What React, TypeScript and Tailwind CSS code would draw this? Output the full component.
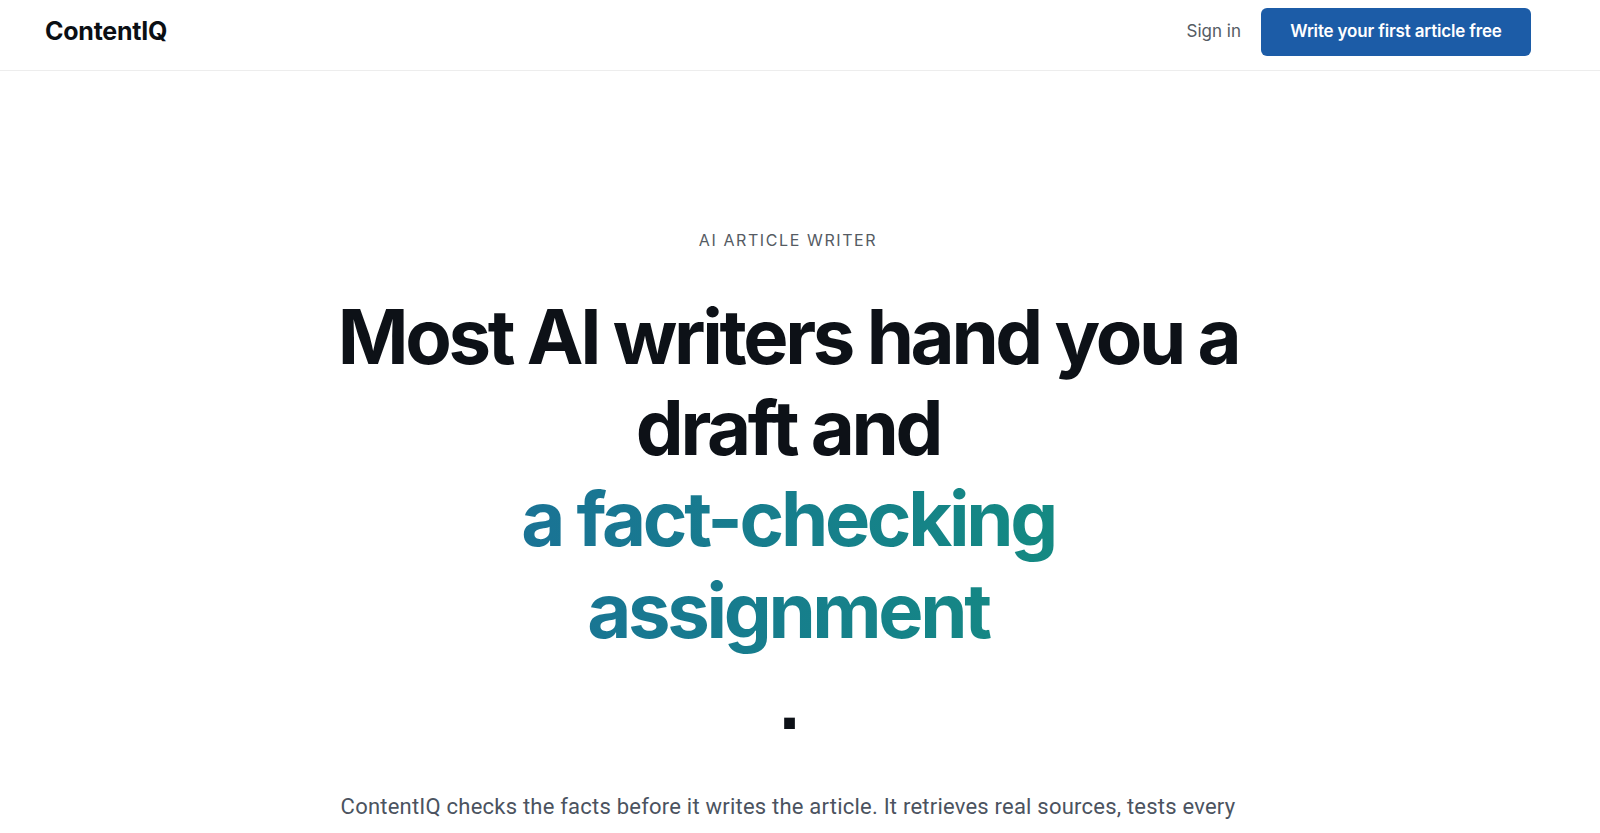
export default function App() {
  return (
    <div className="min-h-screen bg-white text-[#0d1117]" style={{ fontFamily: 'Inter, "Noto Sans", sans-serif' }}>
      {/* Header */}
      <header className="h-[71px] pb-[6px] border-b border-[#ededed] flex items-center justify-between pl-[45px] pr-[69px]">
        <div className="text-[25px] font-bold tracking-[-0.01em] text-[#0b0f14]">ContentIQ</div>
        <nav className="flex items-center gap-5">
          <a href="#" className="text-[17px] text-[#555b63]">Sign in</a>
          <a
            href="#"
            className="h-[48px] w-[270px] flex items-center justify-center rounded-md bg-[#1c5ca7] text-[17px] font-semibold tracking-[-0.01em] text-white"
          >
            Write your first article free
          </a>
        </nav>
      </header>

      {/* Hero */}
      <main className="pr-[24px]">
        <section className="flex flex-col items-center text-center pt-[157px]">
          <p className="text-[16px] leading-6 tracking-[0.1em] uppercase text-[#555b63]">AI Article Writer</p>
          <h1 className="mt-[39px] max-w-[920px] text-[76px] leading-[1.2] font-bold tracking-[-0.044em]">
            Most AI writers hand you a draft and{' '}
            <br />
            <span className="inline-block bg-gradient-to-r from-[#1d6a9b] to-[#14917a] bg-clip-text text-transparent">
              a fact-checking assignment
            </span>
            <span style={{ fontFamily: '"Liberation Sans", Arial, sans-serif' }}>.</span>
          </h1>
          <p
            className="mt-[41px] max-w-[920px] text-[22px] leading-9 tracking-[0.01em] text-[#4b5360]"
            style={{ fontFamily: 'Roboto, "Noto Sans", sans-serif' }}
          >
            ContentIQ checks the facts before it writes the article. It retrieves real sources, tests every
            claim against them, and only then starts drafting.
          </p>
        </section>
      </main>
    </div>
  );
}
